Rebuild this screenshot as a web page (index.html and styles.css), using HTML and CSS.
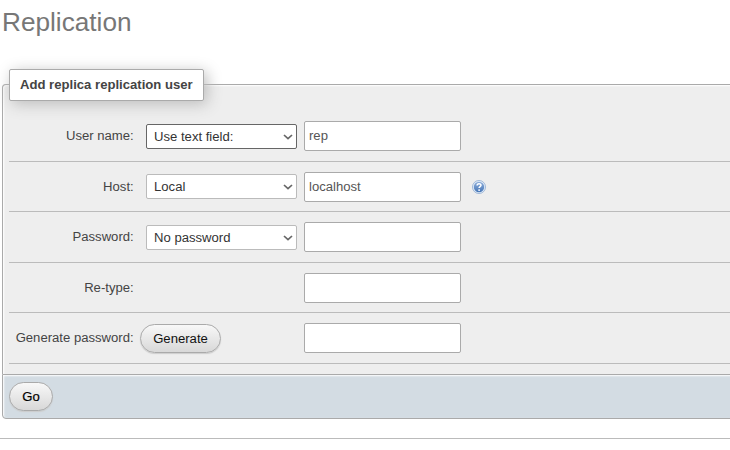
FILE: index.html
```html
<!DOCTYPE html>
<html lang="en">
<head>
<meta charset="utf-8">
<title>Replication</title>
<link rel="stylesheet" href="styles.css">
</head>
<body>
<h2>Replication</h2>
<form>
  <fieldset class="panel">
    <legend>Add replica replication user</legend>
    <div class="row tall">
      <label><span>User name:</span></label>
      <div class="choice active"><span>Use text field:</span><svg viewBox="0 0 10 6"><path d="M1 1l4 3.7L9 1"/></svg></div>
      <input type="text" value="rep">
    </div>
    <div class="row">
      <label><span>Host:</span></label>
      <div class="choice"><span>Local</span><svg viewBox="0 0 10 6"><path d="M1 1l4 3.7L9 1"/></svg></div>
      <input type="text" value="localhost">
      <svg class="help" viewBox="1 1 14 14">
        <defs><linearGradient id="blue" x2="0" y2="1"><stop stop-color="#8eaeda"/><stop offset="1" stop-color="#4777b8"/></linearGradient></defs>
        <circle cx="8" cy="8" r="6.5" fill="#e4edf8" stroke="#8ba9d0" stroke-width=".8"/>
        <circle cx="8" cy="8" r="5.2" fill="url(#blue)"/>
        <path d="M6.1 6.5c0-2.5 3.9-2.4 3.9-.2 0 1.4-1.9 1.4-1.9 2.8" fill="none" stroke="#fff" stroke-width="1.5"/>
        <circle cx="8.1" cy="11.1" r=".95" fill="#fff"/>
      </svg>
    </div>
    <div class="row tall">
      <label><span>Password:</span></label>
      <div class="choice"><span>No password</span><svg viewBox="0 0 10 6"><path d="M1 1l4 3.7L9 1"/></svg></div>
      <input type="text">
    </div>
    <div class="row">
      <label><span>Re-type:</span></label>
      <input type="text">
    </div>
    <div class="row tall">
      <label><span>Generate password:</span></label>
      <button type="button" class="generate">Generate</button>
      <input type="text">
    </div>
  </fieldset>
  <div class="footer"><button type="button" class="go">Go</button></div>
</form>
<hr>
</body>
</html>
```
FILE: styles.css
```css
* { box-sizing: border-box; }
html { overflow: hidden; }
body {
  margin: 0;
  height: 450px;
  overflow: hidden;
  background: #fff;
  color: #444;
  font-family: "Liberation Sans", Arial, sans-serif;
  font-size: 13.12px;
}
h2 {
  margin: 0;
  padding: 6px 0 0 2px;
  height: 69px;
  font-size: 26.2px;
  line-height: 32px;
  font-weight: normal;
  color: #777;
}
form { width: 740px; margin-left: 2px; }
.panel {
  margin: 0;
  min-width: 0;
  height: 305px;
  padding: 10.2px 0 0 6px;
  border: 1px solid #aaa;
  border-bottom: 0;
  border-radius: 4px 0 0 0;
  background: #eee;
  box-shadow: 1px 1px 2px #fff inset;
}
legend {
  width: 195px;
  height: 31.9px;
  padding: 0 10px;
  border: 1px solid #aaa;
  border-radius: 2px;
  background: #fff;
  box-shadow: 3px 3px 15px #bbb;
  font-weight: bold;
  line-height: 30px;
  white-space: nowrap;
}
.row {
  display: grid;
  grid-template-columns: 124px 13px 151px 7px 157px 11px 14px;
  height: 50px;
  border-bottom: 1px solid #bbb;
  align-items: start;
}
.tall { height: 51px; }
label {
  grid-column: 1;
  margin-right: -.7px;
  padding-top: 17px;
  line-height: 16px;
  text-align: right;
  white-space: nowrap;
}
.choice {
  grid-column: 3;
  display: flex;
  align-items: center;
  justify-content: space-between;
  height: 25px;
  margin-top: 12px;
  padding: 0 3px 0 7px;
  border: 1px solid #bbb;
  border-radius: 2px;
  background: #fff;
  color: #333;
}
.tall .choice { margin-top: 13px; }
.choice.active { border-color: #666; }
.choice svg { width: 10px; height: 6px; fill: none; stroke: #666; stroke-width: 1.7; }
input {
  grid-column: 5;
  grid-row: 1;
  width: 157px;
  height: 30px;
  margin: 10px 0 0;
  padding: 0 4px 1px;
  border: 1px solid #aaa;
  border-radius: 2px;
  background: #fff;
  color: #555;
  font: inherit;
}
.help { grid-column: 7; width: 14px; height: 14px; margin-top: 18px; }
button {
  padding: 0;
  border: 1px solid #aaa;
  border-radius: 15px;
  background: linear-gradient(#f8f8f8, #d8d8d8);
  box-shadow: 0 1px 1px #ccc;
  color: #111;
  font: inherit;
}
.generate { grid-column: 2 / 4; width: 81px; height: 29px; margin: 11px 0 0 7px; }
.footer {
  height: 45px;
  padding: 7px 6px;
  border: 1px solid #aaa;
  border-radius: 0 0 0 4px;
  background: #d3dce3;
  box-shadow: 1px 1px 2px #fff inset;
}
.go { display: block; width: 44px; height: 29px; color: #000; -webkit-text-stroke: .2px #000; }
hr { margin: 19px 0 0; border: 0; border-top: 1px solid #bbb; }
```
